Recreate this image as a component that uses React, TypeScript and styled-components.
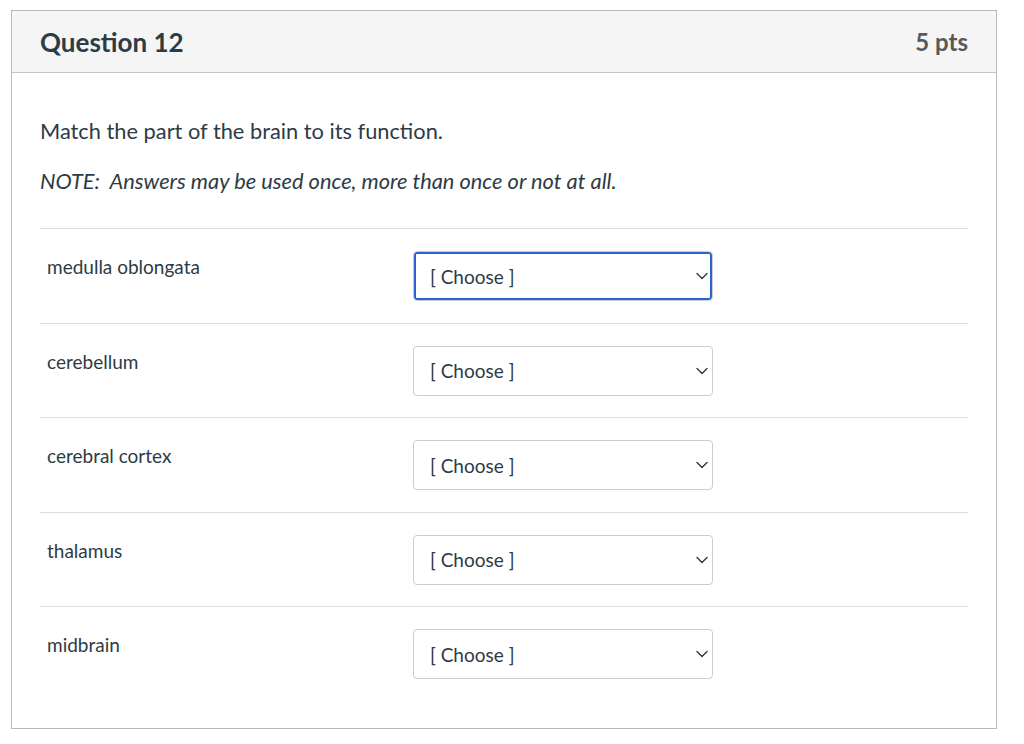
import styled, { createGlobalStyle } from 'styled-components';

const GlobalStyle = createGlobalStyle`
  * {
    box-sizing: border-box;
  }

  body {
    margin: 0;
    background: #ffffff;
    font-family: Lato, 'Noto Sans', sans-serif;
    color: #2d3b45;
  }
`;

const answerRows = [
  'medulla oblongata',
  'cerebellum',
  'cerebral cortex',
  'thalamus',
  'midbrain',
];

const ChevronDown = () => (
  <svg width='12' height='8' viewBox='0 0 12 8' fill='none'>
    <path
      d='M1 1.5 L6 6.5 L11 1.5'
      stroke='#2d3b45'
      strokeWidth='1.4'
      strokeLinecap='round'
      strokeLinejoin='round'
    />
  </svg>
);

const App = () => {
  return (
    <Page>
      <GlobalStyle />
      <QuestionCard>
        <QuestionHeader>
          <QuestionTitle>Question 12</QuestionTitle>
          <QuestionPoints>5 pts</QuestionPoints>
        </QuestionHeader>
        <QuestionBody>
          <QuestionText>Match the part of the brain to its function.</QuestionText>
          <QuestionNote>
            NOTE:&nbsp; Answers may be used once, more than once or not at all.
          </QuestionNote>
          <AnswerList>
            {answerRows.map((label, index) => (
              <AnswerRow key={label}>
                <AnswerLabel>{label}</AnswerLabel>
                <SelectBox type='button' $focused={index === 0}>
                  <SelectText>[ Choose ]</SelectText>
                  <ChevronDown />
                </SelectBox>
              </AnswerRow>
            ))}
          </AnswerList>
        </QuestionBody>
      </QuestionCard>
    </Page>
  );
};

const Page = styled.div`
  padding: 10px 0 16px 11px;
`;

const QuestionCard = styled.section`
  width: 986px;
  border: 1.5px solid #b9b9b9;
  background-color: #ffffff;
`;

const QuestionHeader = styled.header`
  display: flex;
  justify-content: space-between;
  align-items: center;

  height: 62px;
  padding: 0 28px 0 28px;

  background-color: #f5f5f5;
  border-bottom: 1.5px solid #c4c4c4;
`;

const QuestionTitle = styled.h2`
  margin: 0;
  font-size: 26px;
  font-weight: 700;
  color: #2d3b45;
`;

const QuestionPoints = styled.span`
  font-size: 24px;
  font-weight: 700;
  color: #565a5c;
`;

const QuestionBody = styled.div`
  padding: 41px 28px 27px 28px;
`;

const QuestionText = styled.p`
  margin: 0 0 17px;
  font-size: 21.8px;
  line-height: 33px;
  color: #2d3b45;
`;

const QuestionNote = styled.p`
  margin: 0;
  font-size: 21.8px;
  line-height: 33px;
  font-style: italic;
  color: #2d3b45;
`;

const AnswerList = styled.div`
  margin-top: 31px;
`;

const AnswerRow = styled.div`
  display: flex;
  align-items: flex-start;

  padding: 22px 0 21.5px;
  border-top: 1px solid #dcdfe1;
`;

const AnswerLabel = styled.div`
  width: 373px;
  padding: 2px 0 0 7px;

  font-size: 19px;
  line-height: 28px;
  color: #2d3b45;
`;

const SelectBox = styled.button<{ $focused: boolean }>`
  display: flex;
  justify-content: space-between;
  align-items: center;

  width: 300px;
  height: 50px;
  padding: 0 4px 0 16px;

  border: 1px solid #c7cdd1;
  border-radius: 4px;
  background-color: #ffffff;
  box-shadow: ${({ $focused }) =>
    $focused ? 'inset 0 0 0 2px #2b62cf, inset 0 0 0 3px #ffffff' : 'none'};

  font-family: Lato, 'Noto Sans', sans-serif;
  cursor: pointer;
`;

const SelectText = styled.span`
  font-size: 19px;
  color: #2d3b45;
`;

export default App;
